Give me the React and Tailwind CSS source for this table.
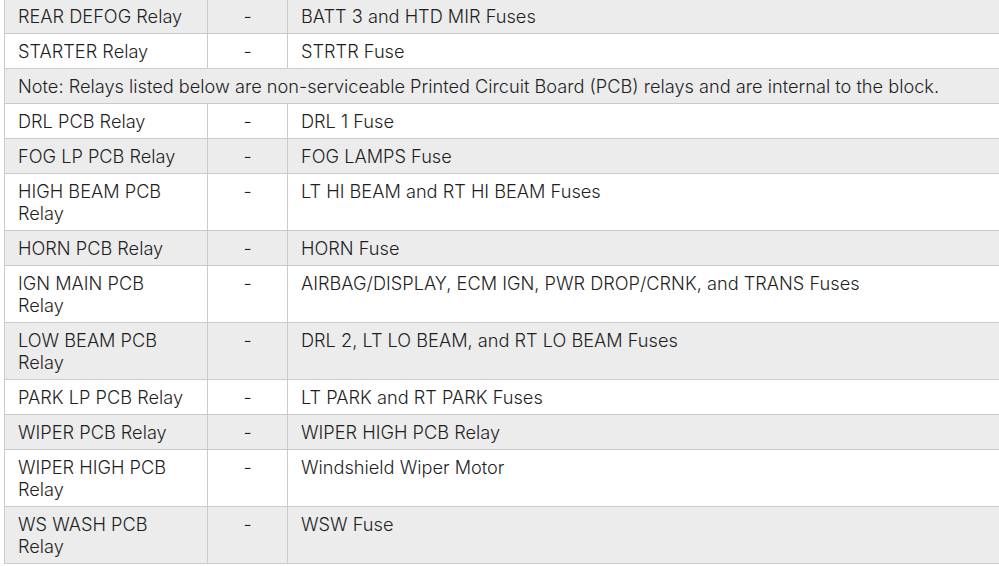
const rows = [
  ["REAR DEFOG Relay", "BATT 3 and HTD MIR Fuses"],
  ["STARTER Relay", "STRTR Fuse"],
  ["NOTE", "Note: Relays listed below are non-serviceable Printed Circuit Board (PCB) relays and are internal to the block."],
  ["DRL PCB Relay", "DRL 1 Fuse"],
  ["FOG LP PCB Relay", "FOG LAMPS Fuse"],
  ["HIGH BEAM PCB Relay", "LT HI BEAM and RT HI BEAM Fuses"],
  ["HORN PCB Relay", "HORN Fuse"],
  ["IGN MAIN PCB Relay", "AIRBAG/DISPLAY, ECM IGN, PWR DROP/CRNK, and TRANS Fuses"],
  ["LOW BEAM PCB Relay", "DRL 2, LT LO BEAM, and RT LO BEAM Fuses"],
  ["PARK LP PCB Relay", "LT PARK and RT PARK Fuses"],
  ["WIPER PCB Relay", "WIPER HIGH PCB Relay"],
  ["WIPER HIGH PCB Relay", "Windshield Wiper Motor"],
  ["WS WASH PCB Relay", "WSW Fuse"],
];

export default function App() {
  return (
    <div
      className="h-[566px] w-[999px] overflow-hidden bg-white pl-[4px] text-[18.2px] font-light leading-[22px] text-[#1f1f1f]"
      style={{ fontFamily: "Inter, sans-serif" }}
    >
      <table className="-mt-[2px] w-[1010px] table-fixed border-collapse">
        <colgroup>
          <col className="w-[203px]" />
          <col className="w-[80px]" />
          <col />
        </colgroup>
        <tbody>
          {rows.map(([relay, fuse], i) => (
            <tr key={i} className={i % 2 === 0 ? "bg-[#ececed]" : "bg-white"}>
              {relay === "NOTE" ? (
                <td colSpan={3} className="border border-[#cbcbcb] px-[13px] py-[6px] align-top">
                  {fuse}
                </td>
              ) : (
                <>
                  <td className="border border-[#cbcbcb] pl-[13px] pr-[20px] py-[6px] align-top">{relay}</td>
                  <td className="border border-[#cbcbcb] px-[13px] py-[6px] text-center align-top">-</td>
                  <td className="border border-[#cbcbcb] px-[13px] py-[6px] align-top">{fuse}</td>
                </>
              )}
            </tr>
          ))}
        </tbody>
      </table>
    </div>
  );
}
